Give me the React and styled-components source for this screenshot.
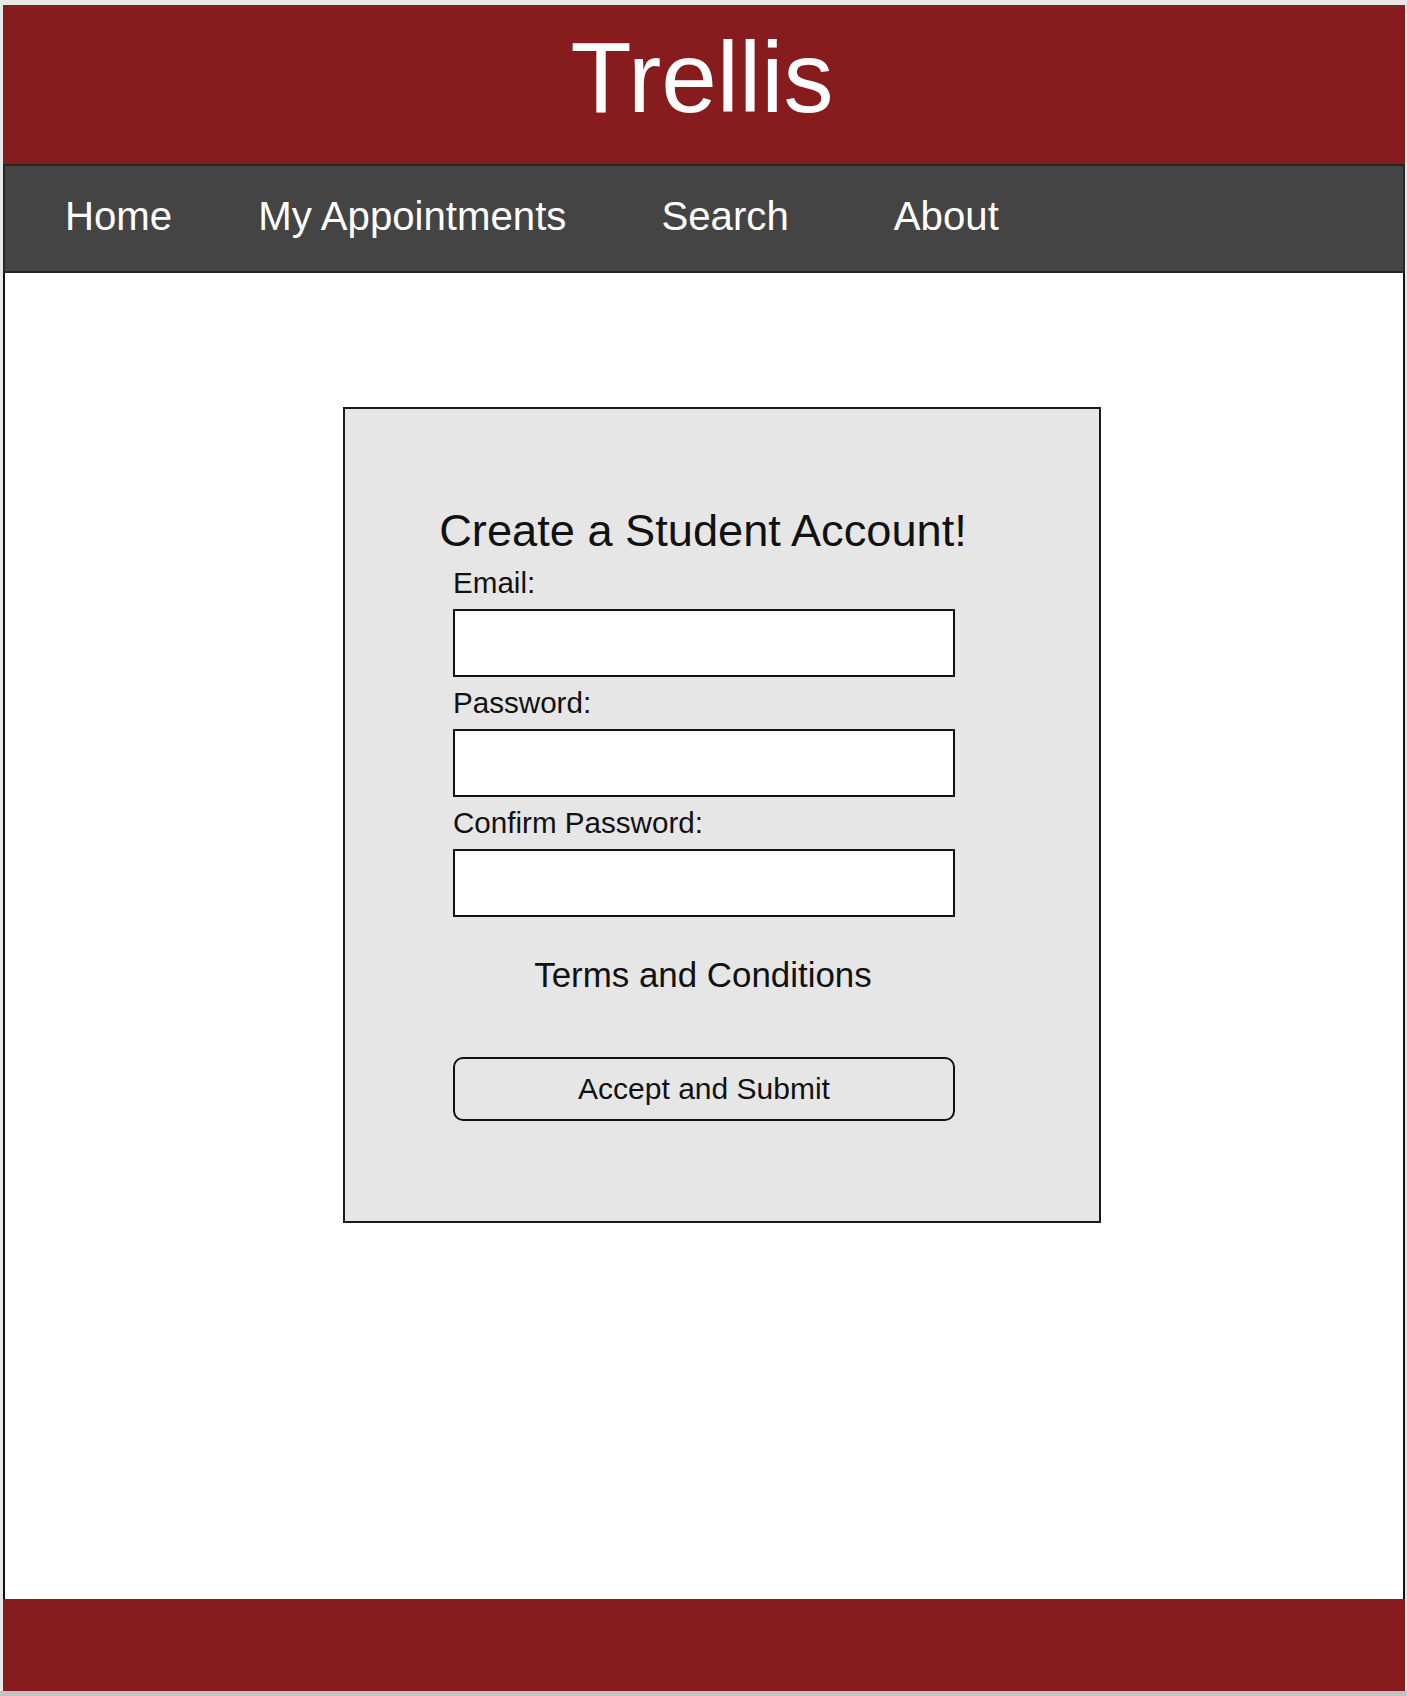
import React from 'react';
import styled, { createGlobalStyle } from 'styled-components';

const navLinks = [
    { label: 'Home', space: 0 },
    { label: 'My Appointments', space: 86 },
    { label: 'Search', space: 95 },
    { label: 'About', space: 105 },
];

const fields = [
    { id: 'email', label: 'Email:', type: 'email' },
    { id: 'password', label: 'Password:', type: 'password' },
    { id: 'confirm', label: 'Confirm Password:', type: 'password' },
];

const App = () => {
    return (
        <>
            <GlobalStyle />
            <Page>
                <Header>
                    <Title>Trellis</Title>
                </Header>
                <Nav>
                    {navLinks.map((link) => (
                        <NavLink key={link.label} href="#" $space={link.space}>
                            {link.label}
                        </NavLink>
                    ))}
                </Nav>
                <Main>
                    <Card>
                        <Form onSubmit={(e) => e.preventDefault()}>
                            <Heading>Create a Student Account!</Heading>
                            {fields.map((field) => (
                                <React.Fragment key={field.id}>
                                    <Label htmlFor={field.id}>{field.label}</Label>
                                    <Input id={field.id} type={field.type} />
                                </React.Fragment>
                            ))}
                            <Terms>Terms and Conditions</Terms>
                            <SubmitButton type="submit">Accept and Submit</SubmitButton>
                        </Form>
                    </Card>
                </Main>
                <Footer />
            </Page>
        </>
    );
};

export default App;

const GlobalStyle = createGlobalStyle`
    * {
        box-sizing: border-box;
    }

    body {
        margin: 0;
        background: #e6e6e6;
        font-family: "Liberation Sans", Arial, sans-serif;
    }
`;

const Page = styled.div`
    width: 1407px;
    padding: 5px 2px 0 3px;
    background: #e8e8e8;
    border-bottom: 5px solid #c2c2c2;
`;

const Header = styled.header`
    height: 159px;
    padding: 22px 4px 0 0;
    background: #871c1e;
    text-align: center;
`;

const Title = styled.h1`
    margin: 0;
    font-size: 100px;
    font-weight: 400;
    line-height: 100px;
    color: #ffffff;
`;

const Nav = styled.nav`
    display: flex;
    height: 109px;
    padding: 0 0 4px 60px;
    background: #444444;
    border: 2px solid #262626;
`;

const NavLink = styled.a`
    margin-left: ${(p) => p.$space}px;
    font-size: 40.2px;
    line-height: 101px;
    color: #ffffff;
    text-decoration: none;
    white-space: nowrap;
`;

const Main = styled.main`
    height: 1326px;
    padding-top: 134px;
    background: #ffffff;
    border-left: 2px solid #111111;
    border-right: 2px solid #111111;
`;

const Card = styled.section`
    width: 758px;
    margin-left: 338px;
    padding: 95px 0 100px 108px;
    background: #e6e6e6;
    border: 2px solid #1a1a1a;
`;

const Form = styled.form`
    display: flex;
    flex-direction: column;
    align-items: center;
    width: 502px;
    color: #111111;
`;

const Heading = styled.h2`
    margin: 0 0 0 -2px;
    font-size: 45.2px;
    font-weight: 400;
    line-height: 53px;
    white-space: nowrap;
`;

const Label = styled.label`
    align-self: flex-start;
    font-size: 29.6px;
    line-height: 52px;
`;

const Input = styled.input`
    width: 100%;
    height: 68px;
    margin: 0;
    background: #ffffff;
    border: 2.5px solid #111111;
    outline: none;
`;

const Terms = styled.p`
    margin: 38px 0 0 -2px;
    font-size: 34.9px;
    line-height: 40px;
`;

const SubmitButton = styled.button`
    width: 100%;
    height: 64px;
    margin-top: 62px;
    background: transparent;
    border: 2.5px solid #111111;
    border-radius: 10px;
    font-family: inherit;
    font-size: 30px;
    color: #111111;
    cursor: pointer;
`;

const Footer = styled.footer`
    height: 92px;
    background: #871c1e;
`;
